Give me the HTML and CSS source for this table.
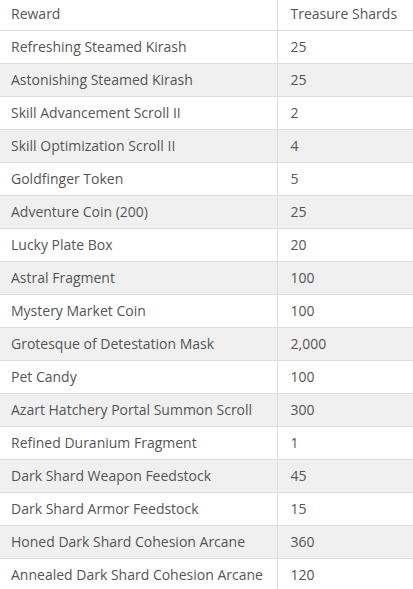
FILE: index.html
```html
<!DOCTYPE html>
<html>
<head>
<meta charset="utf-8">
<link rel="stylesheet" href="styles.css">
</head>
<body>
<table class="rewards">
<colgroup><col class="col1"><col class="col2"></colgroup>
<thead>
<tr><th class="c1">Reward</th><th class="c2">Treasure Shards</th></tr>
</thead>
<tbody>
<tr><td class="c1">Refreshing Steamed Kirash</td><td class="c2">25</td></tr>
<tr><td class="c1">Astonishing Steamed Kirash</td><td class="c2">25</td></tr>
<tr><td class="c1">Skill Advancement Scroll II</td><td class="c2">2</td></tr>
<tr><td class="c1">Skill Optimization Scroll II</td><td class="c2">4</td></tr>
<tr><td class="c1">Goldfinger Token</td><td class="c2">5</td></tr>
<tr><td class="c1">Adventure Coin (200)</td><td class="c2">25</td></tr>
<tr><td class="c1">Lucky Plate Box</td><td class="c2">20</td></tr>
<tr><td class="c1">Astral Fragment</td><td class="c2">100</td></tr>
<tr><td class="c1">Mystery Market Coin</td><td class="c2">100</td></tr>
<tr><td class="c1">Grotesque of Detestation Mask</td><td class="c2">2,000</td></tr>
<tr><td class="c1">Pet Candy</td><td class="c2">100</td></tr>
<tr><td class="c1">Azart Hatchery Portal Summon Scroll</td><td class="c2">300</td></tr>
<tr><td class="c1">Refined Duranium Fragment</td><td class="c2">1</td></tr>
<tr><td class="c1">Dark Shard Weapon Feedstock</td><td class="c2">45</td></tr>
<tr><td class="c1">Dark Shard Armor Feedstock</td><td class="c2">15</td></tr>
<tr><td class="c1">Honed Dark Shard Cohesion Arcane</td><td class="c2">360</td></tr>
<tr><td class="c1">Annealed Dark Shard Cohesion Arcane</td><td class="c2">120</td></tr>
</tbody>
</table>
</body>
</html>
```
FILE: styles.css
```css
html, body {
  margin: 0;
  padding: 0;
  background: #ffffff;
}
body {
  font-family: "Open Sans", "Liberation Sans", sans-serif;
  font-size: 14px;
  color: #555555;
}
.rewards {
  width: 413px;
  border-collapse: collapse;
  table-layout: fixed;
}
.col1 {
  width: 277px;
}
.rewards th, .rewards td {
  text-align: left;
  font-weight: normal;
  padding: 0 0 0 11px;
  border-bottom: 1px solid #dddddd;
  white-space: nowrap;
  overflow: visible;
  line-height: 19px;
}
.rewards tbody tr {
  height: 33px;
}
.rewards thead tr {
  height: 30px;
}
.rewards th {
  padding-bottom: 2px;
}
.rewards .c1 {
  border-right: 1px solid #dddddd;
}
.rewards .c2 {
  padding-left: 13px;
}
.rewards tbody tr:nth-child(even) td {
  background: #f0f0f0;
}
.rewards tbody tr:last-child td {
  border-bottom: none;
}
```
